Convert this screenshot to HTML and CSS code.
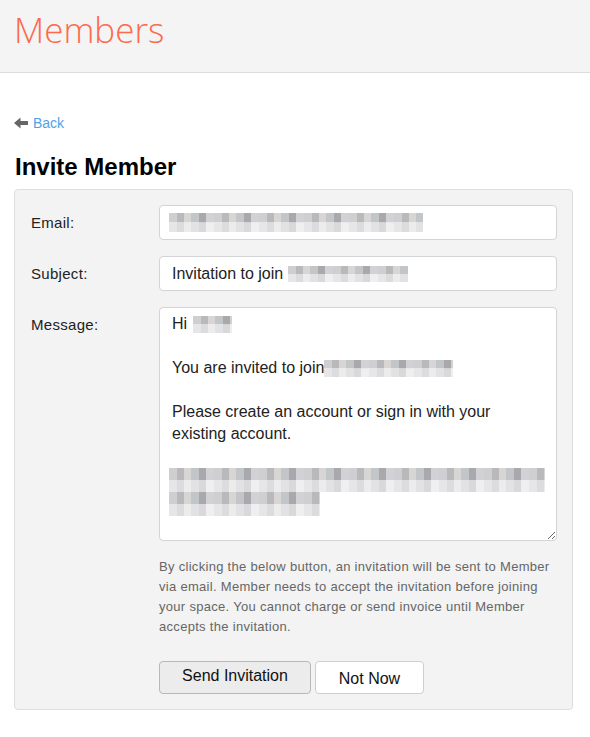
FILE: index.html
```html
<!DOCTYPE html>
<html lang="en">
<head>
<meta charset="utf-8">
<title>Members</title>
<link rel="stylesheet" href="styles.css">
</head>
<body>
<header class="topbar">
  <h1 class="title">Members</h1>
</header>
<main class="content">
  <a class="back" href="#">
    <svg class="back-icon" width="14" height="12" viewBox="0 0 14 12" aria-hidden="true">
      <path d="M0 6 L6.5 0.5 L6.5 4 L14 4 L14 8 L6.5 8 L6.5 11.5 Z" fill="#666"/>
    </svg>
    <span>Back</span>
  </a>
  <h2 class="heading">Invite Member</h2>
  <form class="panel">
    <label class="label">Email:</label>
    <div class="field"><span class="blur blur-email"></span></div>

    <label class="label">Subject:</label>
    <div class="field">Invitation to join&nbsp;<span class="blur blur-subject"></span></div>

    <label class="label">Message:</label>
    <div class="textarea">
      <div class="line">Hi&nbsp;<span class="blur blur-name"></span></div>
      <div class="line">&nbsp;</div>
      <div class="line">You are invited to join<span class="blur blur-space"></span></div>
      <div class="line">&nbsp;</div>
      <div class="line">Please create an account or sign in with your existing account.</div>
      <div class="line">&nbsp;</div>
      <div class="blur-url">
        <span class="blur blur-url1"></span>
        <span class="blur blur-url2"></span>
      </div>
    </div>

    <div class="spacer"></div>
    <p class="help">By clicking the below button, an invitation will be sent to Member via email. Member needs to accept the invitation before joining your space. You cannot charge or send invoice until Member accepts the invitation.</p>

    <div class="spacer"></div>
    <div class="actions">
      <button type="button" class="btn btn-send">Send Invitation</button>
      <button type="button" class="btn btn-cancel">Not Now</button>
    </div>
  </form>
</main>
</body>
</html>
```

FILE: styles.css
```css
* { box-sizing: border-box; }

html, body {
  margin: 0;
  padding: 0;
  background: #fff;
  font-family: "Liberation Sans", Arial, sans-serif;
  color: #333;
}

.topbar {
  height: 73px;
  background: #f4f4f4;
  border-bottom: 1px solid #dcdcdc;
  padding: 12px 14px 0;
}

.title {
  margin: 0;
  font-family: "Open Sans", sans-serif;
  font-weight: 300;
  font-size: 35px;
  line-height: 35px;
  color: #fd6a4c;
}

.content {
  padding: 40px 17px 0 14px;
}

.back {
  display: flex;
  align-items: center;
  gap: 5px;
  height: 20px;
  font-size: 14px;
  color: #4da3e8;
  text-decoration: none;
  width: max-content;
}

.back-icon { display: block; }

.heading {
  margin: 20px 0 8px 1px;
  font-size: 24px;
  line-height: 28px;
  font-weight: bold;
  color: #000;
}

.panel {
  display: grid;
  grid-template-columns: 128px 1fr;
  row-gap: 16px;
  background: #f3f3f3;
  border: 1px solid #dedede;
  border-radius: 4px;
  padding: 15px 15px 15px 16px;
  margin: 0;
}

.label {
  font-size: 15px;
  line-height: 35px;
  letter-spacing: 0.3px;
  color: #222;
  align-self: start;
}

.field {
  height: 35px;
  background: #fff;
  border: 1px solid #d4d4d4;
  border-radius: 4px;
  padding: 0 12px;
  font-size: 16px;
  line-height: 33px;
  color: #222;
  display: flex;
  align-items: center;
}

.textarea {
  height: 234px;
  background: #fff;
  border: 1px solid #d4d4d4;
  border-radius: 4px;
  padding: 5px 12px;
  font-size: 16px;
  line-height: 22px;
  color: #222;
  resize: both;
  overflow: hidden;
}

.line { min-height: 22px; }

.blur {
  display: inline-block;
  vertical-align: middle;
  background-image:
    repeating-linear-gradient(90deg, #cfcfd2 0 8px, #b9b9bc 8px 15px, #d8d6d4 15px 22px, #c3c6c8 22px 30px, #a9a9ac 30px 37px, #d2d2d6 37px 45px),
    repeating-linear-gradient(90deg, #e6e6e8 0 8px, #dcdcde 8px 15px, #ececec 15px 22px, #e2e2e4 22px 30px, #d9d9db 30px 37px, #efefef 37px 45px);
  background-size: 100% 50%, 100% 50%;
  background-position: top left, bottom left;
  background-repeat: no-repeat;
}

.blur-email { width: 254px; height: 19px; margin-left: -3px; }
.blur-subject { width: 120px; height: 16px; }
.blur-name { width: 39px; height: 17px; margin-left: 1px; }
.blur-space { width: 129px; height: 17px; }

.blur-url {
  display: flex;
  flex-direction: column;
  margin-left: -3px;
  margin-top: 1px;
}
.blur-url .blur { display: block; height: 24px; }
.blur-url1 { width: 376px; }
.blur-url2 { width: 151px; }

.help {
  margin: 0;
  font-size: 13px;
  line-height: 20px;
  letter-spacing: 0.3px;
  color: #666;
}

.actions {
  display: flex;
  gap: 4px;
  margin-top: 8px;
}

.btn {
  height: 33px;
  padding: 0 22px;
  font-family: "Liberation Sans", Arial, sans-serif;
  font-size: 16px;
  color: #111;
  border-radius: 4px;
  cursor: pointer;
}

.btn-send {
  width: 152px;
  background: #ececec;
  border: 1px solid #b8b8b8;
  padding-bottom: 3px;
}

.btn-cancel {
  width: 109px;
  background: #fff;
  border: 1px solid #cfcfcf;
  padding-top: 2px;
}
```
